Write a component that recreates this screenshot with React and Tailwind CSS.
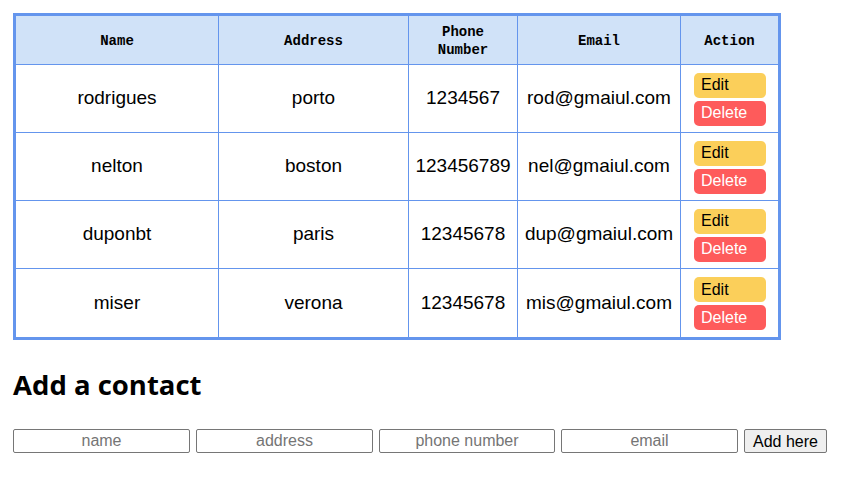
import React from 'react';

const contacts = [
  { name: 'rodrigues', address: 'porto', phone: '1234567', email: 'rod@gmaiul.com' },
  { name: 'nelton', address: 'boston', phone: '123456789', email: 'nel@gmaiul.com' },
  { name: 'duponbt', address: 'paris', phone: '12345678', email: 'dup@gmaiul.com' },
  { name: 'miser', address: 'verona', phone: '12345678', email: 'mis@gmaiul.com' },
];

const App = () => {
  return (
    <div className="min-h-screen bg-white pt-[13px] pl-[13px] font-['Liberation_Sans',Arial,sans-serif] text-black">
      {/* Contacts table */}
      <table className="border-separate border-spacing-0 border-[3px] border-[#6495ed]">
        <thead>
          <tr className="bg-[#d0e2f8] font-['Liberation_Mono',monospace] text-[14px] leading-[18px] font-bold">
            <th className="w-[203px] h-[49px] pt-[1px] border-r border-b border-[#6495ed]">Name</th>
            <th className="w-[190px] pt-[1px] border-r border-b border-[#6495ed]">Address</th>
            <th className="w-[109px] pt-[1px] border-r border-b border-[#6495ed]">Phone<br />Number</th>
            <th className="w-[163px] pt-[1px] border-r border-b border-[#6495ed]">Email</th>
            <th className="w-[97px] pt-[1px] border-b border-[#6495ed]">Action</th>
          </tr>
        </thead>
        <tbody className="text-[19px] text-center">
          {contacts.map((c, i) => {
            const last = i === contacts.length - 1;
            const b = last ? '' : 'border-b';
            return (
              <tr key={i}>
                <td className={`h-[68px] border-r border-[#6495ed] ${b}`}>{c.name}</td>
                <td className={`border-r border-[#6495ed] ${b}`}>{c.address}</td>
                <td className={`border-r border-[#6495ed] ${b}`}>{c.phone}</td>
                <td className={`border-r border-[#6495ed] ${b}`}>{c.email}</td>
                <td className={`border-[#6495ed] ${b} pl-[13px] pt-[1px]`}>
                  <div className="flex flex-col gap-[3px] text-[16px] text-left">
                    <button className="w-[72px] h-[25px] rounded-[5px] bg-[#fbcf5a] pl-[7px] text-left leading-[20px]">Edit</button>
                    <button className="w-[72px] h-[25px] rounded-[5px] bg-[#fe5b5b] pl-[7px] text-left text-white leading-[22px]">Delete</button>
                  </div>
                </td>
              </tr>
            );
          })}
        </tbody>
      </table>

      {/* Add form */}
      <h2 className="mt-[25px] font-['Open_Sans',sans-serif] text-[27.5px] font-bold leading-[40px]">Add a contact</h2>
      <form className="mt-[24px] flex gap-[6px] text-[16px]" onSubmit={(e) => e.preventDefault()}>
        <input placeholder="name" className="w-[177px] h-[24px] border border-[#767676] rounded-[2px] text-center placeholder:text-[#757575]" />
        <input placeholder="address" className="w-[177px] h-[24px] border border-[#767676] rounded-[2px] text-center placeholder:text-[#757575]" />
        <input placeholder="phone number" className="w-[176px] h-[24px] border border-[#767676] rounded-[2px] text-center placeholder:text-[#757575]" />
        <input placeholder="email" className="w-[177px] h-[24px] border border-[#767676] rounded-[2px] text-center placeholder:text-[#757575]" />
        <button className="w-[83px] h-[24px] border border-[#767676] rounded-[2px] bg-[#efefef]">Add here</button>
      </form>
    </div>
  );
};

export default App;
